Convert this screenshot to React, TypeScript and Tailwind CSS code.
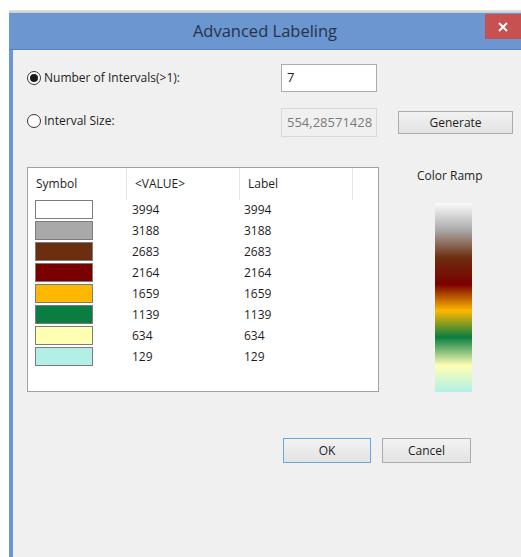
import { useState } from "react";

type Row = { color: string; value: string; label: string };

const rows: Row[] = [
  { color: "bg-[#ffffff]", value: "3994", label: "3994" },
  { color: "bg-[#a9a9a9]", value: "3188", label: "3188" },
  { color: "bg-[#6b2e0e]", value: "2683", label: "2683" },
  { color: "bg-[#7a0000]", value: "2164", label: "2164" },
  { color: "bg-[#ffb800]", value: "1659", label: "1659" },
  { color: "bg-[#0a7d40]", value: "1139", label: "1139" },
  { color: "bg-[#ffffb4]", value: "634", label: "634" },
  { color: "bg-[#b1efe7]", value: "129", label: "129" },
];

const Radio = ({ checked }: { checked: boolean }) => (
  <span className="flex h-[14px] w-[14px] items-center justify-center rounded-full border border-[#333] bg-white">
    {checked && <span className="h-[8px] w-[8px] rounded-full bg-[#1a1a1a]" />}
  </span>
);

const App = () => {
  const [mode, setMode] = useState<"count" | "size">("count");

  return (
    <div className="flex h-[557px] w-[521px] flex-col overflow-hidden bg-white font-['Open_Sans','Noto_Sans',sans-serif] text-[12px] text-[#1e1e1e]">
      {/* strip of the window behind */}
      <div className="h-[10px] shrink-0 bg-white" />
      <div className="ml-[9px] h-[3px] shrink-0 bg-gradient-to-b from-[#e4e4e4] to-[#c9c9c9]" />

      <div className="ml-[9px] flex flex-1 flex-col">
        {/* title bar */}
        <div className="relative flex h-[37px] shrink-0 items-center justify-center border-b border-[#5a82b8] bg-[#6b96d0]">
          <span className="text-[16.5px] text-[#25344a]">Advanced Labeling</span>
          <button className="absolute right-0 top-[1px] flex h-[25px] w-[36px] items-center justify-center bg-[#c75050] text-white">
            <svg width="10" height="10" viewBox="0 0 10 10">
              <path d="M1 1L9 9M9 1L1 9" stroke="white" strokeWidth="2" />
            </svg>
          </button>
        </div>

        {/* body */}
        <div className="flex flex-1 flex-col border-l-4 border-[#6b96d0] bg-[#f0f0f0] pl-[14px]">
          <div className="mt-[14px] flex h-[28px] items-center">
            <label className="flex w-[254px] items-center gap-[3px]" onClick={() => setMode("count")}>
              <Radio checked={mode === "count"} />
              <span>Number of Intervals(&gt;1):</span>
            </label>
            <div className="flex h-[28px] w-[96px] items-center border border-[#acacac] bg-white px-[5px] text-[13px]">
              7
            </div>
          </div>

          <div className="mt-[16px] flex h-[29px] items-center">
            <label className="-mt-[3px] flex w-[254px] items-center gap-[3px]" onClick={() => setMode("size")}>
              <Radio checked={mode === "size"} />
              <span>Interval Size:</span>
            </label>
            <div className="flex h-[29px] w-[96px] items-center overflow-hidden whitespace-nowrap border border-[#d9d9d9] bg-[#f0f0f0] px-[5px] text-[13px] text-[#7a7a7a]">
              554,28571428
            </div>
            <button className="ml-[21px] h-[23px] w-[115px] border border-[#acacac] bg-gradient-to-b from-[#f2f2f2] to-[#e3e3e3]">
              Generate
            </button>
          </div>

          <div className="mt-[30px] flex">
            {/* symbol table */}
            <div className="h-[225px] w-[352px] border border-[#a0a0a0] bg-white">
              <div className="flex h-[32px] items-center">
                <div className="flex h-full w-[99px] items-center border-r border-[#e6e6e6] pl-[8px]">Symbol</div>
                <div className="flex h-full w-[113px] items-center border-r border-[#e6e6e6] pl-[8px]">&lt;VALUE&gt;</div>
                <div className="flex h-full w-[113px] items-center border-r border-[#e6e6e6] pl-[8px]">Label</div>
              </div>
              <div className="flex flex-col gap-[2px]">
                {rows.map((r) => (
                  <div key={r.value} className="flex h-[19px] items-center">
                    <div className="w-[99px] pl-[7px]">
                      <div className={`h-[19px] w-[58px] border border-[#7c7c7c] ${r.color}`} />
                    </div>
                    <div className="w-[113px] pl-[5px]">{r.value}</div>
                    <div className="w-[113px] pl-[4px]">{r.label}</div>
                  </div>
                ))}
              </div>
            </div>

            {/* color ramp */}
            <div className="flex flex-col pl-[38px] pt-[1px]">
              <span className="h-[16px] leading-[16px]">Color Ramp</span>
              <div className="ml-[18px] mt-[19px] h-[189px] w-[37px] bg-[linear-gradient(to_bottom,#fbfbfe_0%,#acacac_14%,#6b2e0e_29%,#7a0000_43%,#ffb800_57%,#0a7d40_71%,#ffffb4_86%,#b1efe7_100%)]" />
            </div>
          </div>

          <div className="mt-[46px] flex pl-[256px]">
            <button className="h-[25px] w-[88px] border border-[#66a7e8] bg-gradient-to-b from-[#f2f2f2] to-[#e3e3e3]">
              OK
            </button>
            <button className="ml-[11px] h-[25px] w-[89px] border border-[#acacac] bg-gradient-to-b from-[#f2f2f2] to-[#e3e3e3]">
              Cancel
            </button>
          </div>
        </div>
      </div>
    </div>
  );
};

export default App;
